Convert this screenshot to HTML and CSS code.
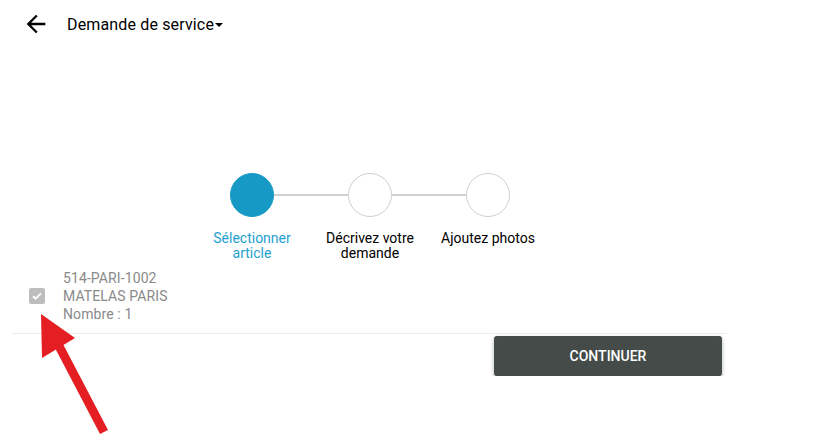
FILE: index.html
```html
<!DOCTYPE html>
<html lang="fr">
<head>
	<meta charset="utf-8">
	<title>Demande de service</title>
	<link rel="stylesheet" href="styles.css">
</head>
<body>
	<header class="topbar">
		<button class="back-btn" aria-label="Retour">
			<svg width="28" height="28" viewBox="0 0 24 24"><path d="M20 11H7.83l5.59-5.59L12 4l-8 8 8 8 1.41-1.41L7.83 13H20v-2z" fill="#000"/></svg>
		</button>
		<span class="title">Demande de service</span>
		<span class="caret"></span>
	</header>

	<div class="stepper">
		<div class="step active">
			<div class="dot"></div>
			<div class="label">Sélectionner article</div>
		</div>
		<div class="step">
			<div class="dot"></div>
			<div class="label">Décrivez votre demande</div>
		</div>
		<div class="step">
			<div class="dot"></div>
			<div class="label">Ajoutez photos</div>
		</div>
	</div>

	<div class="item">
		<span class="check">
			<svg width="12" height="12" viewBox="0 0 12 12"><path d="M2 6.2l2.6 2.5L10 3.4" fill="none" stroke="#fff" stroke-width="2"/></svg>
		</span>
		<div class="item-text">
			<div>514-PARI-1002</div>
			<div>MATELAS PARIS</div>
			<div>Nombre : 1</div>
		</div>
	</div>
	<div class="separator"></div>

	<div class="actions">
		<button class="continue-btn">CONTINUER</button>
	</div>

	<!-- flèche rouge d'annotation -->
	<svg class="annotation" width="120" height="130" viewBox="0 0 120 130">
		<polygon points="41,9 42,53 75,33" fill="#e41e22"/>
		<line x1="59" y1="41" x2="104" y2="127" stroke="#e41e22" stroke-width="9"/>
	</svg>
</body>
</html>
```

FILE: styles.css
```css
body {
	margin: 0;
	background-color: #fff;
	font-family: Roboto, "Noto Sans", sans-serif;
	color: #000;
}
.topbar {
	height: 48px;
	display: flex;
	align-items: center;
	padding-left: 22px;
}
.back-btn {
	border: 0;
	background: none;
	padding: 0;
	width: 28px;
	height: 28px;
	display: flex;
	margin-right: 17px;
}
.title {
	font-size: 16px;
	letter-spacing: 0.15px;
}
.caret {
	width: 0;
	height: 0;
	border-left: 4px solid transparent;
	border-right: 4px solid transparent;
	border-top: 4px solid #000;
	margin-left: 1px;
	margin-top: 1px;
}
.stepper {
	display: flex;
	margin-left: 193px;
	margin-top: 125px;
}
.step {
	width: 118px;
	display: flex;
	flex-direction: column;
	align-items: center;
	position: relative;
}
.step + .step::before {
	content: "";
	position: absolute;
	top: 21px;
	left: -37px;
	width: 74px;
	height: 2px;
	background-color: #d0d0d0;
}
.dot {
	width: 42px;
	height: 42px;
	border-radius: 50%;
	border: 1px solid #cfcfcf;
	background-color: #fff;
}
.step.active .dot {
	background-color: #1799c6;
	border-color: #1799c6;
}
.label {
	width: 112px;
	margin-top: 14px;
	font-size: 14px;
	line-height: 15px;
	text-align: center;
}
.step.active .label {
	color: #1f9fd0;
}
.item {
	display: flex;
	align-items: center;
	margin-top: 8px;
	padding-left: 29px;
}
.check {
	width: 16px;
	height: 16px;
	border-radius: 2px;
	background-color: #bdbdbd;
	display: flex;
	align-items: center;
	justify-content: center;
	margin-right: 18px;
	margin-top: 0;
}
.item-text {
	font-size: 14px;
	line-height: 18px;
	color: #8a8a8a;
	letter-spacing: 0.1px;
}
.separator {
	margin: 10px 0 0 12px;
	width: 715px;
	height: 1px;
	background-color: #ececec;
}
.actions {
	padding-left: 494px;
	margin-top: 2px;
}
.continue-btn {
	width: 228px;
	height: 40px;
	border: 0;
	border-radius: 3px;
	background-color: #444b49;
	color: #fff;
	font-family: Roboto, sans-serif;
	font-size: 14px;
	font-weight: 500;
	padding-top: 1px;
	box-shadow: 0 2px 4px rgba(0, 0, 0, 0.3);
}
.annotation {
	position: absolute;
	left: 0;
	top: 305px;
}
```
